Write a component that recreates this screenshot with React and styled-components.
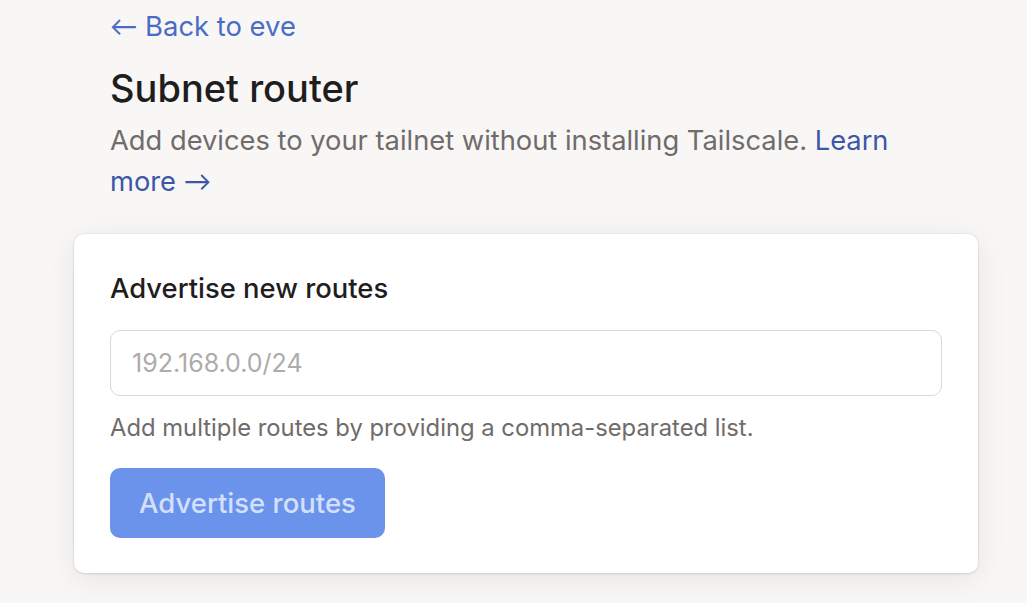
import React from 'react';
import styled, { createGlobalStyle } from 'styled-components';

const GlobalStyle = createGlobalStyle`
  html, body {
    margin: 0;
    padding: 0;
    background: #f8f7f6;
    font-family: Inter, "Noto Sans", sans-serif;
    color: #1f1e1e;
  }
  * { box-sizing: border-box; }
`

const Page = styled.main`
  min-height: 100vh;
  padding: 8px 0 24px 74px;
`

const Column = styled.div`
  width: 904px;
`

const Header = styled.header`
  padding: 0 36px;
`

// the arrows in the original are long and thin, Inter's are too short
const Arrow = styled.span`
  font-family: Lato, sans-serif;
`

const BackLink = styled.a`
  display: inline-block;
  font-size: 27.4px;
  line-height: 36px;
  color: #4a6cc6;
  text-decoration: none;
`

const Title = styled.h1`
  margin: 20px 0 0;
  font-size: 38px;
  line-height: 48px;
  font-weight: 500;
  color: #1f1e1e;
`

const Lead = styled.p`
  margin: 9px 0 0;
  font-size: 27.3px;
  line-height: 40px;
  color: #6f6c6b;
`

const LeadLink = styled.a`
  color: #3c57a8;
  text-decoration: none;
`

const Card = styled.section`
  margin-top: 32px;
  background: #fff;
  border-radius: 10px;
  padding: 36px 36px 35px;
  box-shadow: 0 0 0 1px rgba(0, 0, 0, 0.03), 0 6px 32px rgba(0, 0, 0, 0.08), 0 1px 3px rgba(0, 0, 0, 0.09);
`

const CardTitle = styled.h2`
  margin: 0;
  font-size: 27.4px;
  line-height: 36px;
  font-weight: 500;
  color: #1f1e1e;
`

const Input = styled.input`
  display: block;
  width: 100%;
  height: 66px;
  margin-top: 24px;
  padding: 0 21px;
  border: 1px solid #dad8d7;
  border-radius: 10px;
  font-family: inherit;
  font-size: 25px;
  color: #1f1e1e;
  outline: none;
  &::placeholder { color: #aeabaa; }
`

const Hint = styled.p`
  margin: 16px 0 0;
  font-size: 23.8px;
  line-height: 32px;
  color: #6f6c6b;
`

const Button = styled.button`
  display: block;
  margin-top: 24px;
  height: 70px;
  padding: 0 29px;
  border: none;
  border-radius: 10px;
  background: #6c93ec;
  color: #d3e0fb;
  font-family: inherit;
  font-size: 27.5px;
  font-weight: 500;
  cursor: not-allowed;
`

export default function App() {
  return (
    <>
      <GlobalStyle />
      <Page>
        <Column>
          <Header>
            <BackLink href="#"><Arrow>←</Arrow> Back to eve</BackLink>
            <Title>Subnet router</Title>
            <Lead>
              Add devices to your tailnet without installing Tailscale.{' '}
              <LeadLink href="#">Learn more <Arrow>→</Arrow></LeadLink>
            </Lead>
          </Header>
          <Card>
            <CardTitle>Advertise new routes</CardTitle>
            <Input placeholder="192.168.0.0/24" />
            <Hint>Add multiple routes by providing a comma-separated list.</Hint>
            <Button disabled>Advertise routes</Button>
          </Card>
        </Column>
      </Page>
    </>
  );
}
